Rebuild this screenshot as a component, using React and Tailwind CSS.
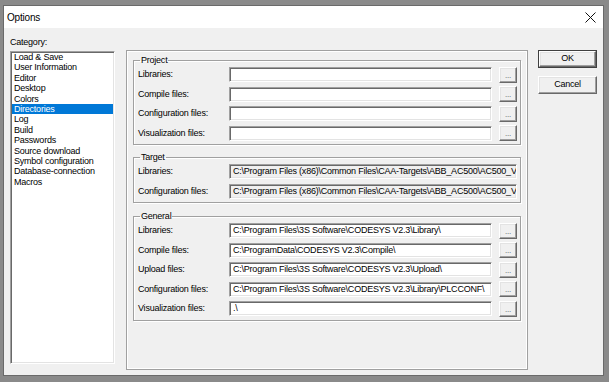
import React from 'react';

const FONT = "font-['Liberation_Sans',Arial,sans-serif]";
const SUNKEN =
  'border border-t-[#a0a0a0] border-l-[#a0a0a0] border-r-white border-b-white shadow-[inset_1px_1px_0_#696969,inset_-1px_-1px_0_#e3e3e3]';
const RAISED =
  'border border-t-white border-l-white border-r-[#696969] border-b-[#696969] shadow-[inset_-1px_-1px_0_#a0a0a0,inset_1px_1px_0_#e3e3e3]';

const categories = [
  'Load & Save',
  'User Information',
  'Editor',
  'Desktop',
  'Colors',
  'Directories',
  'Log',
  'Build',
  'Passwords',
  'Source download',
  'Symbol configuration',
  'Database-connection',
  'Macros',
];

const project = [
  { label: 'Libraries:', value: '' },
  { label: 'Compile files:', value: '' },
  { label: 'Configuration files:', value: '' },
  { label: 'Visualization files:', value: '' },
];

// only the visible part of the target paths
const target = [
  { label: 'Libraries:', value: 'C:\\Program Files (x86)\\Common Files\\CAA-Targets\\ABB_AC500\\AC500_V' },
  { label: 'Configuration files:', value: 'C:\\Program Files (x86)\\Common Files\\CAA-Targets\\ABB_AC500\\AC500_V' },
];

const general = [
  { label: 'Libraries:', value: 'C:\\Program Files\\3S Software\\CODESYS V2.3\\Library\\' },
  { label: 'Compile files:', value: 'C:\\ProgramData\\CODESYS V2.3\\Compile\\' },
  { label: 'Upload files:', value: 'C:\\Program Files\\3S Software\\CODESYS V2.3\\Upload\\' },
  { label: 'Configuration files:', value: 'C:\\Program Files\\3S Software\\CODESYS V2.3\\Library\\PLCCONF\\' },
  { label: 'Visualization files:', value: '.\\' },
];

const PathRow = ({ label, value, browse = true }) => (
  <div className="h-[19.5px] flex items-center">
    <span className="w-[95px] pl-[4px] shrink-0 whitespace-nowrap">{label}</span>
    <div
      className={`h-[15px] ${browse ? 'w-[263px] bg-white' : 'w-[288px] bg-[#f0f0f0]'} ${SUNKEN} pl-[3px] flex items-center overflow-hidden whitespace-nowrap`}
    >
      {value}
    </div>
    {browse && (
      <button className={`ml-[7px] w-[18px] h-[16px] bg-[#f0f0f0] ${RAISED} flex items-end justify-center pb-[3px] text-[8px] leading-[6px] text-[#555]`}>
        ...
      </button>
    )}
  </div>
);

const Group = ({ title, className = '', children }) => (
  <fieldset
    className={`w-[388px] border border-[#a0a0a0] shadow-[inset_1px_1px_0_#fff,1px_1px_0_#fff] pb-[1px] ${className}`}
  >
    <legend className="ml-[6px] px-[1px] leading-[10px] h-[10px]">{title}</legend>
    {children}
  </fieldset>
);

export default function App() {
  return (
    <div className={`w-[609px] h-[382px] bg-[#8a8a8a] pt-[5px] pl-[3px] text-[9px] tracking-[-0.23px] text-black ${FONT}`}>
      <div className="w-[601px] h-[371px] border border-[#6a6a6a] flex flex-col bg-[#f0f0f0]">
        <div className="h-[22px] bg-white flex items-center justify-between pl-[3px] pr-[6px]">
          <span className="text-[10px] tracking-[-0.2px]">Options</span>
          <svg width="11" height="11" viewBox="0 0 11 11" className="mr-[1px]">
            <path d="M0.5 0.5 L10.5 10.5 M10.5 0.5 L0.5 10.5" stroke="#111" strokeWidth="1" fill="none" />
          </svg>
        </div>

        <div className="flex-1 flex items-start pl-[6px]">
          <div className="w-[105px] pt-[8px] flex flex-col">
            <span className="h-[12px] leading-[12px]">Category:</span>
            <div className={`mt-[3px] h-[313px] bg-white ${SUNKEN} px-[1px]`}>
              {categories.map((c) => (
                <div
                  key={c}
                  className={`h-[10.4px] leading-[10.4px] pl-[2px] whitespace-nowrap ${
                    c === 'Directories' ? 'bg-[#0078d7] text-white' : ''
                  }`}
                >
                  {c}
                </div>
              ))}
            </div>
          </div>

          <div className="ml-[11px] mt-[22px] w-[402px] h-[320px] border border-[#a0a0a0] shadow-[inset_1px_1px_0_#fff,inset_-1px_-1px_0_#fff] pl-[6px] pt-[4px]">
            <Group title="Project">
              {project.map((r) => (
                <PathRow key={r.label} {...r} />
              ))}
            </Group>
            <Group title="Target" className="mt-[7px]">
              {target.map((r) => (
                <PathRow key={r.label} {...r} browse={false} />
              ))}
            </Group>
            <Group title="General" className="mt-[8px]">
              {general.map((r) => (
                <PathRow key={r.label} {...r} />
              ))}
            </Group>
          </div>

          <div className="ml-[10px] mt-[22px] w-[59px] flex flex-col gap-[8px]">
            <div className="border border-[#404040]">
              <button className={`w-full h-[16px] bg-[#f0f0f0] ${RAISED} flex items-center justify-center`}>OK</button>
            </div>
            <button className={`w-full h-[18px] bg-[#f0f0f0] ${RAISED} flex items-center justify-center`}>Cancel</button>
          </div>
        </div>
      </div>
    </div>
  );
}
